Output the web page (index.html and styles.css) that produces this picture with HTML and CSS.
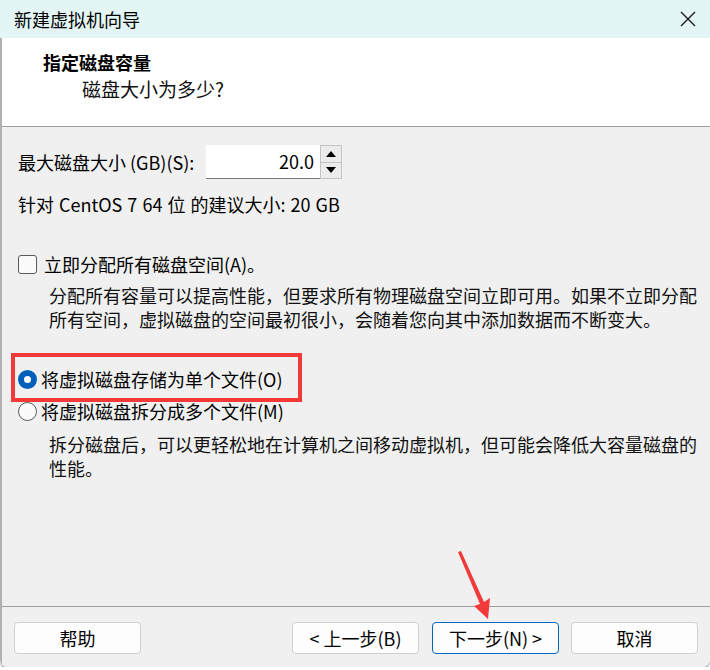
FILE: index.html
```
<!DOCTYPE html>
<html lang="zh-CN">
<head>
  <meta charset="UTF-8">
  <title>新建虚拟机向导</title>
  <link rel="stylesheet" href="styles.css">
</head>
<body>
  <div class="window">
    <div class="titlebar">
      <span class="title">新建虚拟机向导</span>
      <svg class="close" width="16" height="16" viewBox="0 0 16 16">
        <path d="M1 1 L15 15 M15 1 L1 15" stroke="#1a1a1a" stroke-width="1.4" fill="none"/>
      </svg>
    </div>

    <div class="frame">
      <div class="header">
        <h1>指定磁盘容量</h1>
        <p class="subtitle">磁盘大小为多少?</p>
      </div>

      <div class="content">
        <div class="size-row">
          <label>最大磁盘大小 (GB)(S):</label>
          <div class="spinbox">
            <div class="spin-value">20.0</div>
            <div class="spin-buttons">
              <div class="spin-btn"><span class="arrow-up"></span></div>
              <div class="spin-btn"><span class="arrow-down"></span></div>
            </div>
          </div>
        </div>
        <p class="hint">针对 CentOS 7 64 位 的建议大小: 20 GB</p>

        <div class="option check-option">
          <span class="checkbox"></span>
          <span>立即分配所有磁盘空间(A)。</span>
        </div>
        <p class="desc">分配所有容量可以提高性能，但要求所有物理磁盘空间立即可用。如果不立即分配所有空间，虚拟磁盘的空间最初很小，会随着您向其中添加数据而不断变大。</p>

        <div class="option radio-single">
          <span class="radio checked"></span>
          <span>将虚拟磁盘存储为单个文件(O)</span>
        </div>
        <div class="option">
          <span class="radio"></span>
          <span>将虚拟磁盘拆分成多个文件(M)</span>
        </div>
        <p class="desc desc-split">拆分磁盘后，可以更轻松地在计算机之间移动虚拟机，但可能会降低大容量磁盘的性能。</p>
      </div>

      <div class="footer">
        <button class="btn">帮助</button>
        <div class="nav-buttons">
          <button class="btn">&lt; 上一步(B)</button>
          <button class="btn btn-default">下一步(N) &gt;</button>
          <button class="btn">取消</button>
        </div>
      </div>
    </div>

    <div class="mark-box"></div>
    <svg class="mark-arrow" width="50" height="80" viewBox="0 0 50 80">
      <polygon points="3,2 6,1 29,52 35,48 33,69 19,56 25,54" fill="#f23a3a"/>
    </svg>
  </div>
</body>
</html>
```

FILE: styles.css
```
body {
  margin: 0;
  font-family: "Noto Sans CJK SC", "Noto Sans", sans-serif;
  background: #ffffff;
}
.window {
  position: relative;
  width: 710px;
  height: 667px;
  border-bottom-left-radius: 8px;
  border-bottom-right-radius: 8px;
  box-shadow: 0 2px 2px rgba(0, 0, 0, 0.35);
  overflow: hidden;
}
.titlebar {
  height: 38px;
  background: #e3f6f5;
  display: flex;
  align-items: center;
  justify-content: space-between;
  padding: 0 14px 0 14px;
}
.title {
  font-size: 18px;
  color: #000;
}
.frame {
  border-left: 2px solid #b0b0b0;
  height: 629px;
  display: flex;
  flex-direction: column;
  background: #f0f0f0;
}
.header {
  height: 89px;
  background: #fff;
  border-bottom: 1px solid #a0a0a0;
  padding: 11px 0 0 41px;
  box-sizing: border-box;
}
.header h1 {
  margin: 0;
  font-size: 18px;
  font-weight: bold;
  line-height: 26px;
}
.subtitle {
  margin: 1px 0 0 39px;
  font-size: 19px;
  line-height: 26px;
  color: #111;
}
.content {
  flex: 1;
  padding: 18px 0 0 16px;
  font-size: 18px;
  color: #000;
}
.size-row {
  display: flex;
  align-items: center;
  height: 34px;
}
.size-row label {
  width: 188px;
}
.spinbox {
  display: flex;
  height: 34px;
}
.spin-value {
  width: 108px;
  background: #fff;
  border-bottom: 1px solid #7a7a7a;
  text-align: right;
  padding-right: 6px;
  line-height: 33px;
}
.spin-buttons {
  width: 22px;
  display: flex;
  flex-direction: column;
  border: 1px solid #c4c4c4;
  box-sizing: border-box;
}
.spin-btn {
  flex: 1;
  background: #ececec;
  display: flex;
  align-items: center;
  justify-content: center;
}
.spin-btn + .spin-btn {
  border-top: 1px solid #c4c4c4;
}
.arrow-up {
  border: 5px solid transparent;
  border-bottom: 6px solid #000;
  border-top: none;
}
.arrow-down {
  border: 5px solid transparent;
  border-top: 6px solid #000;
  border-bottom: none;
}
.hint {
  margin: 12px 0 0 0;
  line-height: 26px;
  word-spacing: 1px;
}
.option {
  display: flex;
  align-items: center;
  gap: 4px;
  height: 32px;
}
.check-option {
  margin-top: 31px;
  gap: 7px;
}
.checkbox {
  width: 17px;
  height: 17px;
  border: 1px solid #5a5a5a;
  border-radius: 3px;
  background: #fbfbfb;
}
.desc {
  margin: 3px 0 0 31px;
  width: 655px;
  line-height: 24px;
  color: #111;
}
.desc-split {
  margin-top: 5px;
}
.radio-single {
  margin-top: 32px;
}
.radio {
  width: 19px;
  height: 19px;
  border: 1px solid #5a5a5a;
  border-radius: 50%;
  box-sizing: border-box;
  background: #fbfbfb;
}
.radio.checked {
  border: 6px solid #005fb8;
  background: #fff;
}
.footer {
  height: 61px;
  box-sizing: border-box;
  border-top: 1px solid #a0a0a0;
  display: flex;
  justify-content: space-between;
  padding: 15px 12px 0 12px;
}
.nav-buttons {
  display: flex;
  gap: 13px;
}
.nav-buttons .btn:last-child {
  margin-left: -1px;
}
.btn {
  width: 127px;
  height: 32px;
  background: #fdfdfd;
  border: 1px solid #d0d0d0;
  border-radius: 4px;
  font-family: "Noto Sans CJK SC", "Noto Sans", sans-serif;
  font-size: 18px;
  color: #000;
  padding: 0;
}
.btn-default {
  border-color: #0067c0;
}
.mark-box {
  position: absolute;
  left: 11px;
  top: 353px;
  width: 283px;
  height: 41px;
  border: 4px solid #f23a3a;
}
.mark-arrow {
  position: absolute;
  left: 455px;
  top: 550px;
}
```
